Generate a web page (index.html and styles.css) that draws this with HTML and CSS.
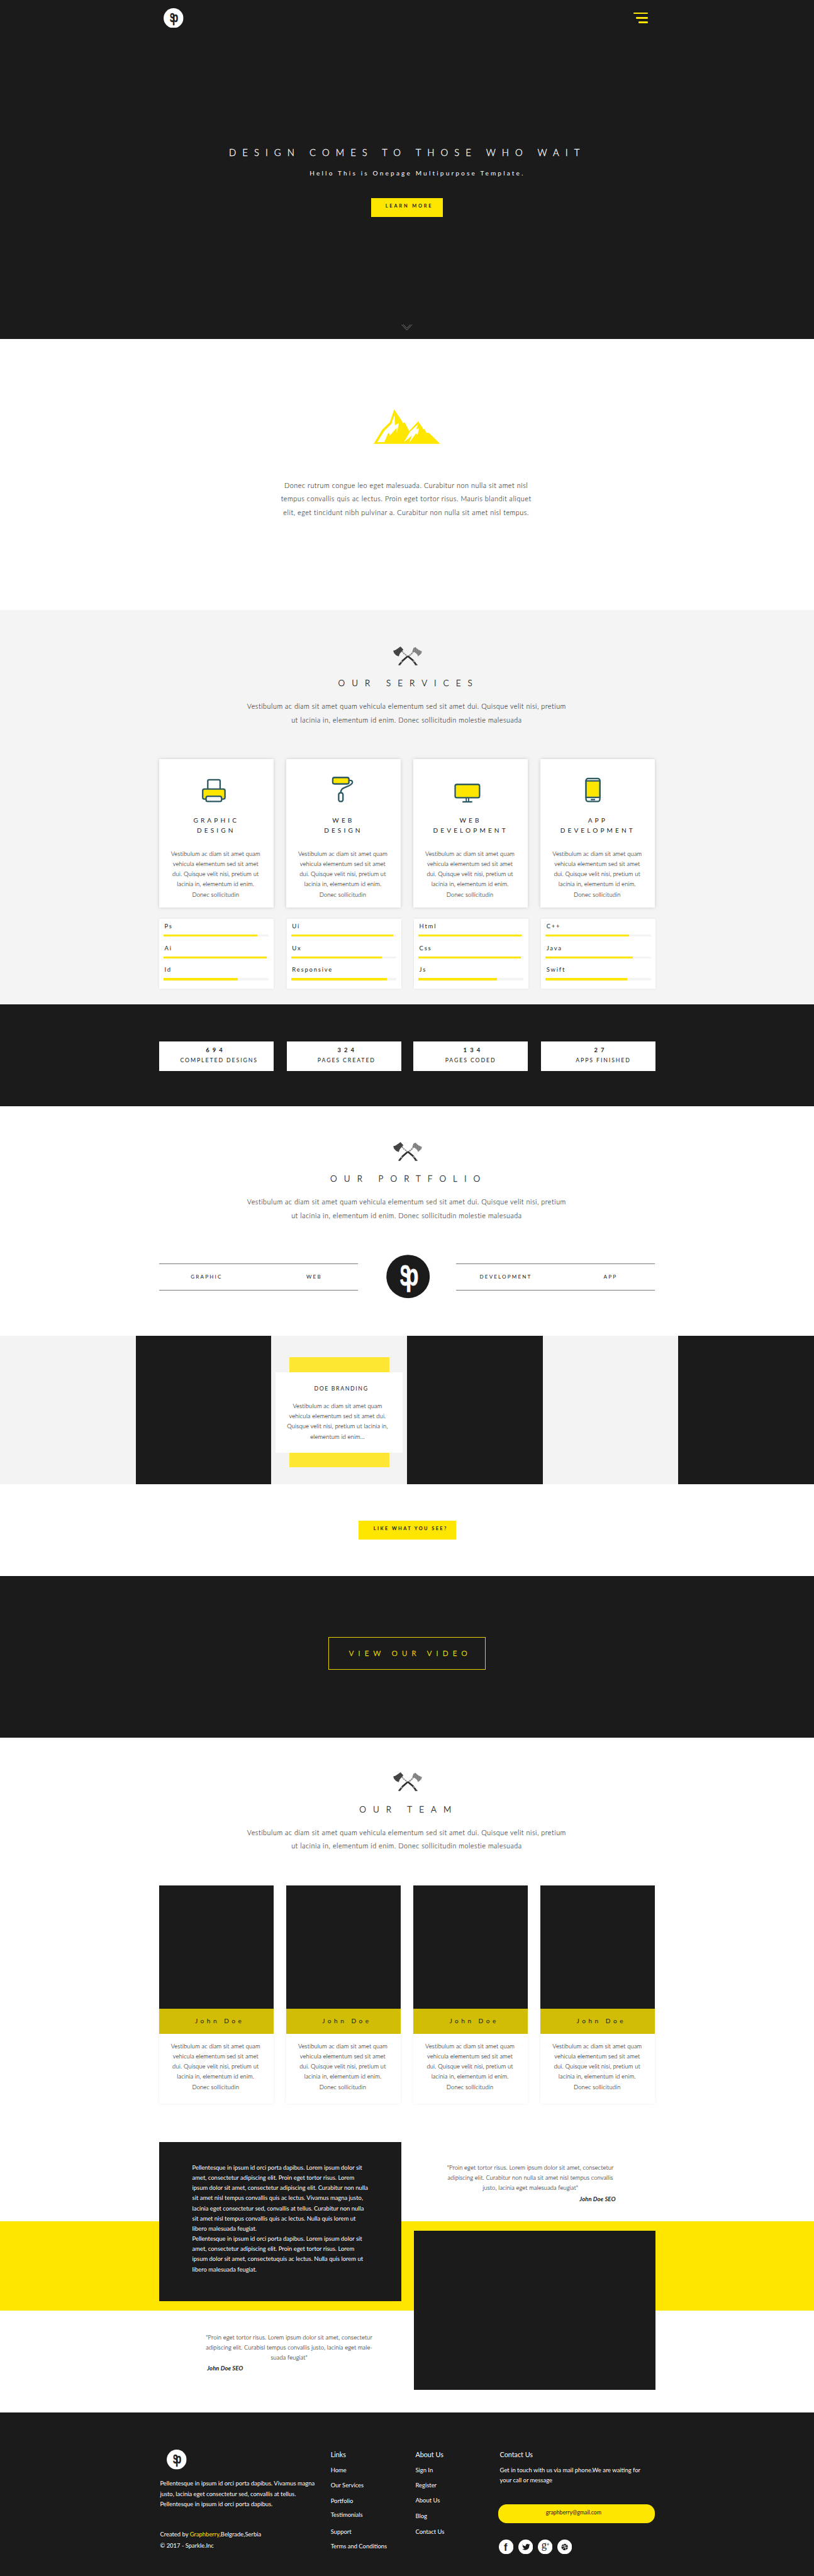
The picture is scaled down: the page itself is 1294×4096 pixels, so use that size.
FILE: index.html
```
<!DOCTYPE html>
<html lang="en">
<head>
<meta charset="utf-8">
<title>Sparkle</title>
<link rel="stylesheet" href="styles.css">
</head>
<body>
<svg class="defs" aria-hidden="true">
  <defs>
    <pattern id="grain-dark" width="17" height="13" patternUnits="userSpaceOnUse">
      <rect width="17" height="13" fill="#2b2b2b"/>
      <path d="M1 2h4v2H1zM9 1h3v3H9zM5 7h5v2H5zM13 8h3v3h-3zM1 10h3v2H1z" fill="#a5a5a5"/>
    </pattern>
    <pattern id="grain-light" width="15" height="13" patternUnits="userSpaceOnUse">
      <rect width="15" height="13" fill="#555"/>
      <path d="M1 1h5v4H1zM8 3h5v3H8zM3 8h6v3H3zM11 9h3v3h-3z" fill="#dcdcdc"/>
    </pattern>
    <symbol id="axes" viewBox="83 30 203 135" preserveAspectRatio="none">
      <path d="M144 62L160 80L186 100" fill="none" stroke="#8d8d8d" stroke-width="9" stroke-dasharray="12 4"/>
      <path d="M228 62L212 82L184 104" fill="none" stroke="#8d8d8d" stroke-width="10" stroke-dasharray="13 3"/>
      <path d="M184 100L150 130L126 160" fill="none" stroke="#2e2e2e" stroke-width="12"/>
      <path d="M186 98L222 128L246 160" fill="none" stroke="#2e2e2e" stroke-width="12"/>
      <path d="M146 134l-8 9M224 130l9 11" stroke="#ccc" stroke-width="5"/>
      <path d="M120 160h13M236 160h18" stroke="#555" stroke-width="8"/>
      <path d="M83 60L100 54L118 42L135 30L155 52L142 66L130 80L122 100L104 92L90 78Z" fill="url(#grain-dark)"/>
      <path d="M226 40L240 35L262 53L286 64L281 80L258 100L252 85L234 70L218 66Z" fill="url(#grain-light)"/>
    </symbol>
    <symbol id="logo" viewBox="50 31 310 310">
      <circle class="disc" cx="205" cy="186" r="154"/>
      <g class="mark">
        <text transform="translate(147 248) scale(.55 1)" font-size="204">S</text>
        <text transform="translate(188 251) scale(.7 1)" font-size="212">p</text>
      </g>
    </symbol>
  </defs>
</svg>

<header class="hero">
  <nav class="container topbar">
    <svg class="logo"><use href="#logo"/></svg>
    <div class="menu"><i></i><i></i><i></i></div>
  </nav>
  <h1>DESIGN COMES TO THOSE WHO WAIT</h1>
  <p class="tagline">Hello This is Onepage Multipurpose Template.</p>
  <a class="btn btn-learn">LEARN MORE</a>
  <svg class="chevron" viewBox="0 0 26 14"><path d="M.5 0L13 13.4L25.500 0M4.500 0L13 8.800L21.500 0"/></svg>
</header>

<section class="intro">
  <svg class="mountain" viewBox="631 184 308 228" preserveAspectRatio="none">
    <path fill="#ffe600" d="M631 412L671 317L706 268L726 184L758 252L766 273L775 269L795 326L837 263L857 303L859 313L868 315L874 338L888 340L939 412Z"/>
    <path fill="#fff" d="M728 218L729 289L748 274L738 342L737 306L706 358L700 335L680 400L648 400L680 326L713 280ZM837 281L828 315L841 310L834 352L827 342L795 406L808 356L771 400L800 330Z"/>
  </svg>
  <p>Donec rutrum congue leo eget malesuada. Curabitur non nulla sit amet nisl<br>tempus convallis quis ac lectus. Proin eget tortor risus. Mauris blandit aliquet<br>elit, eget tincidunt nibh pulvinar a. Curabitur non nulla sit amet nisl tempus.</p>
</section>

<section class="services">
  <div class="head">
    <svg class="axes"><use href="#axes"/></svg>
    <h2>OUR SERVICES</h2>
    <p>Vestibulum ac diam sit amet quam vehicula elementum sed sit amet dui. Quisque velit nisi, pretium<br>ut lacinia in, elementum id enim. Donec sollicitudin molestie malesuada</p>
  </div>
  <div class="container cards">
    <article class="card">
      <svg class="icon" viewBox="0 0 270 110"><path d="M114.700 70V52q0-3.300 3.300-3.300h22.500q3.300 0 3.300 3.300v18" fill="#fff"/><rect x="102.700" y="70.700" width="52.600" height="23.600" rx="4" fill="#ffe600"/><rect x="110.700" y="87.700" width="36.600" height="12.400" rx="4" fill="#f6f6f6"/></svg>
      <h3>GRAPHIC<br>DESIGN</h3>
      <p>Vestibulum ac diam sit amet quam<br>vehicula elementum sed sit amet<br>dui. Quisque velit nisi, pretium ut<br>lacinia in, elementum id enim.<br>Donec sollicitudin</p>
    </article>
    <article class="card">
      <svg class="icon" viewBox="0 0 270 110"><rect x="109.700" y="43.400" width="38.200" height="15.200" rx="4" fill="#ffe600"/><path d="M148.500 50.200h3c4 0 5.300 3 4.300 6c-3 8-20 9.500-24.500 15c-2 2.500-2.600 4-2.600 7" fill="none"/><rect x="123.700" y="79.400" width="10.200" height="20.700" rx="4.500" fill="#f6f6f6"/></svg>
      <h3>WEB<br>DESIGN</h3>
      <p>Vestibulum ac diam sit amet quam<br>vehicula elementum sed sit amet<br>dui. Quisque velit nisi, pretium ut<br>lacinia in, elementum id enim.<br>Donec sollicitudin</p>
    </article>
    <article class="card">
      <svg class="icon" viewBox="0 0 270 110"><rect x="98.700" y="59.700" width="57.600" height="31.400" rx="4" fill="#ffe600"/><path d="M125 92v8M130.500 92v8" stroke-width="2.800"/><path d="M116 100.900h23"/></svg>
      <h3>WEB<br>DEVELOPMENT</h3>
      <p>Vestibulum ac diam sit amet quam<br>vehicula elementum sed sit amet<br>dui. Quisque velit nisi, pretium ut<br>lacinia in, elementum id enim.<br>Donec sollicitudin</p>
    </article>
    <article class="card">
      <svg class="icon" viewBox="0 0 270 110"><rect x="107.700" y="45.700" width="32.600" height="54.300" rx="5" fill="#fff"/><path d="M107.700 51.300h32.600v38.900h-32.600z" fill="#ffe600"/><path d="M119 95.500h10"/></svg>
      <h3>APP<br>DEVELOPMENT</h3>
      <p>Vestibulum ac diam sit amet quam<br>vehicula elementum sed sit amet<br>dui. Quisque velit nisi, pretium ut<br>lacinia in, elementum id enim.<br>Donec sollicitudin</p>
    </article>
  </div>
  <div class="container skills">
    <dl><dt>Ps</dt><dd><i style="width:89.2%"></i></dd><dt>Ai</dt><dd><i style="width:98%"></i></dd><dt>Id</dt><dd><i style="width:70.7%"></i></dd></dl>
    <dl><dt>Ui</dt><dd><i style="width:96.9%"></i></dd><dt>Ux</dt><dd><i style="width:86.3%"></i></dd><dt>Responsive</dt><dd><i style="width:91%"></i></dd></dl>
    <dl><dt>Html</dt><dd><i style="width:97.8%"></i></dd><dt>Css</dt><dd><i style="width:97.5%"></i></dd><dt>Js</dt><dd><i style="width:74.6%"></i></dd></dl>
    <dl><dt>C++</dt><dd><i style="width:79.3%"></i></dd><dt>Java</dt><dd><i style="width:83%"></i></dd><dt>Swift</dt><dd><i style="width:77.7%"></i></dd></dl>
  </div>
</section>

<section class="stats">
  <div class="container counters">
    <div class="c1"><b>694</b><span>COMPLETED DESIGNS</span></div>
    <div class="c2"><b>324</b><span>PAGES CREATED</span></div>
    <div class="c3"><b>134</b><span>PAGES CODED</span></div>
    <div class="c4"><b>27</b><span>APPS FINISHED</span></div>
  </div>
</section>

<section class="portfolio">
  <div class="head">
    <svg class="axes"><use href="#axes"/></svg>
    <h2>OUR PORTFOLIO</h2>
    <p>Vestibulum ac diam sit amet quam vehicula elementum sed sit amet dui. Quisque velit nisi, pretium<br>ut lacinia in, elementum id enim. Donec sollicitudin molestie malesuada</p>
  </div>
  <div class="container filter">
    <div class="tabs tabs-left"><a>GRAPHIC</a><a>WEB</a></div>
    <svg class="logo logo-big"><use href="#logo"/></svg>
    <div class="tabs tabs-right"><a>DEVELOPMENT</a><a>APP</a></div>
  </div>
  <div class="tiles">
    <div></div>
    <div class="dark"></div>
    <div class="featured">
      <div class="accent">
        <div class="sheet">
          <h4>DOE BRANDING</h4>
          <p>Vestibulum ac diam sit amet quam<br>vehicula elementum sed sit amet dui.<br>Quisque velit nisi, pretium ut lacinia in,<br>elementum id enim...</p>
        </div>
      </div>
    </div>
    <div class="dark"></div>
    <div></div>
    <div class="dark"></div>
  </div>
  <a class="btn btn-like">LIKE WHAT YOU SEE?</a>
</section>

<section class="video"><a>VIEW OUR VIDEO</a></section>

<section class="team">
  <div class="head">
    <svg class="axes"><use href="#axes"/></svg>
    <h2>OUR TEAM</h2>
    <p>Vestibulum ac diam sit amet quam vehicula elementum sed sit amet dui. Quisque velit nisi, pretium<br>ut lacinia in, elementum id enim. Donec sollicitudin molestie malesuada</p>
  </div>
  <div class="container members">
    <article><div class="photo"></div><h3>John Doe</h3><div class="bio"><svg><use href="#axes"/></svg><p>Vestibulum ac diam sit amet quam<br>vehicula elementum sed sit amet<br>dui. Quisque velit nisi, pretium ut<br>lacinia in, elementum id enim.<br>Donec sollicitudin</p></div></article>
    <article><div class="photo"></div><h3>John Doe</h3><div class="bio"><svg><use href="#axes"/></svg><p>Vestibulum ac diam sit amet quam<br>vehicula elementum sed sit amet<br>dui. Quisque velit nisi, pretium ut<br>lacinia in, elementum id enim.<br>Donec sollicitudin</p></div></article>
    <article><div class="photo"></div><h3>John Doe</h3><div class="bio"><svg><use href="#axes"/></svg><p>Vestibulum ac diam sit amet quam<br>vehicula elementum sed sit amet<br>dui. Quisque velit nisi, pretium ut<br>lacinia in, elementum id enim.<br>Donec sollicitudin</p></div></article>
    <article><div class="photo"></div><h3>John Doe</h3><div class="bio"><svg><use href="#axes"/></svg><p>Vestibulum ac diam sit amet quam<br>vehicula elementum sed sit amet<br>dui. Quisque velit nisi, pretium ut<br>lacinia in, elementum id enim.<br>Donec sollicitudin</p></div></article>
  </div>
</section>

<section class="testimonials">
  <div class="container voices">
    <div>
      <div class="panel"><p>Pellentesque in ipsum id orci porta dapibus. Lorem ipsum dolor sit<br>amet, consectetur adipiscing elit. Proin eget tortor risus. Lorem<br>ipsum dolor sit amet, consectetur adipiscing elit. Curabitur non nulla<br>sit amet nisl tempus convallis quis ac lectus. Vivamus magna justo,<br>lacinia eget consectetur sed, convallis at tellus. Curabitur non nulla<br>sit amet nisl tempus convallis quis ac lectus. Nulla quis lorem ut<br>libero malesuada feugiat.<br>Pellentesque in ipsum id orci porta dapibus. Lorem ipsum dolor sit<br>amet, consectetur adipiscing elit. Proin eget tortor risus. Lorem<br>ipsum dolor sit amet, consectetuquis ac lectus. Nulla quis lorem ut<br>libero malesuada feugiat.</p></div>
      <blockquote class="quote-left">"Proin eget tortor risus. Lorem ipsum dolor sit amet, consectetur<br>adipiscing elit. Curabisl tempus convallis justo, lacinia eget male-<br>suada feugiat"</blockquote>
      <cite class="cite-left">John Doe SEO</cite>
    </div>
    <div>
      <blockquote class="quote-right">"Proin eget tortor risus. Lorem ipsum dolor sit amet, consectetur<br>adipiscing elit. Curabitur non nulla sit amet nisl tempus convallis<br>justo, lacinia eget malesuada feugiat"</blockquote>
      <cite class="cite-right">John Doe SEO</cite>
      <div class="panel"></div>
    </div>
  </div>
</section>

<footer class="footer">
  <div class="container columns">
    <div class="about">
      <svg class="logo"><use href="#logo"/></svg>
      <p>Pellentesque in ipsum id orci porta dapibus. Vivamus magna<br>justo, lacinia eget consectetur sed, convallis at tellus.<br>Pellentesque in ipsum id orci porta dapibus.</p>
      <p class="made">Created by <em>Graphberry</em>,Belgrade,Serbia</p>
      <p class="copy">© 2017 - Sparkle.Inc</p>
    </div>
    <div>
      <h5>Links</h5>
      <ul class="links"><li>Home</li><li>Our Services</li><li>Portfolio</li><li>Testimonials</li><li>Support</li><li>Terms and Conditions</li></ul>
    </div>
    <div>
      <h5>About Us</h5>
      <ul class="company"><li>Sign In</li><li>Register</li><li>About Us</li><li>Blog</li><li>Contact Us</li></ul>
    </div>
    <div class="contact">
      <h5>Contact Us</h5>
      <p>Get in touch with us via mail phone.We are waiting for<br>your call or message</p>
      <a class="mail">graphberry@gmail.com</a>
      <div class="social">
        <svg viewBox="0 0 104 104"><circle cx="52" cy="52" r="52"/><text x="36" y="78" font-size="72" font-weight="700" font-family="Liberation Sans, sans-serif">f</text></svg>
        <svg viewBox="0 0 104 104"><circle cx="52" cy="52" r="52"/><path d="M27 35c7 8 15 12 25 13c-2-10 5-17 13-17c4 0 7 2 9 4l7-3l-4 6l6-1l-6 6c1 18-12 31-29 31c-8 0-15-2-21-6c7 0 12-1 16-5c-5 0-8-3-10-7h5c-6-2-9-6-9-11l5 1c-5-4-6-9-3-15"/></svg>
        <svg viewBox="0 0 104 104"><circle cx="52" cy="52" r="52"/><text x="26" y="64" font-size="74" font-family="Liberation Serif, serif">g</text><path d="M70 24h3v8h8v3h-8v8h-3v-8h-8v-3h8z"/></svg>
        <svg viewBox="0 0 104 104"><circle cx="52" cy="52" r="52"/><circle class="ball" cx="52" cy="53" r="23"/><path class="seams" d="M42 31q14 16 20 45M30 49q26 2 37-13M36 70q12-20 39-15"/></svg>
      </div>
    </div>
  </div>
</footer>
</body>
</html>
```
FILE: styles.css
```
/* 1rem = 100 design pixels of the 1920px layout */
html { font-size: 67.396px; }
* { box-sizing: border-box; }
body {
  margin: 0;
  font: 400 .14rem/.24rem Lato, "Liberation Sans", sans-serif;
  color: #1b1b1b;
  background: #fff;
  overflow-x: hidden;
}
h1, h2, h3, h4, h5, p, dl, dd, ul, blockquote { margin: 0; padding: 0; font-weight: 400; }
ul { list-style: none; }
svg { display: block; flex: none; }
.defs { position: absolute; width: 0; height: 0; }
p, h1, h2, h3, h4, h5, a, li, span, blockquote { white-space: nowrap; }
.container { width: 11.7rem; margin: 0 auto; }

/* logo */
.logo { width: .47rem; height: .47rem; }
.disc { fill: var(--disc, #fff); }
.mark { fill: var(--mark, #1b1b1b); stroke: var(--mark, #1b1b1b); stroke-width: 4; font-family: "Liberation Sans", sans-serif; font-weight: 700; }
.logo-big { width: 1.03rem; height: 1.03rem; margin-left: .06rem; --disc: #1b1b1b; --mark: #fff; }

/* hero */
.hero { height: 8rem; background: #1b1b1b; color: #fff; display: flex; flex-direction: column; align-items: center; padding-top: .19rem; }
.topbar { display: flex; justify-content: space-between; padding: 0 .17rem 0 .11rem; height: .47rem; }
.menu { display: flex; flex-direction: column; align-items: flex-end; gap: .07rem; padding-top: .1rem; }
.menu i { width: .34rem; height: .04rem; border-radius: .02rem; background: #ffe600; }
.menu i:nth-child(2) { width: .28rem; }
.menu i:nth-child(3) { width: .22rem; }
.hero h1 { margin-top: 2.785rem; font-size: .22rem; line-height: .3rem; font-weight: 300; letter-spacing: .149rem; padding-left: .02rem; -webkit-text-stroke: .3px; }
.tagline { margin-top: .247rem; font-size: .15rem; line-height: .2rem; letter-spacing: .047rem; padding-left: .49rem; }
.btn { display: block; height: .45rem; background: #ffe600; color: #1b1b1b; font-size: .11rem; line-height: .39rem; font-weight: 700; }
.btn-learn { width: 1.7rem; margin-top: .478rem; padding-left: .34rem; letter-spacing: .042rem; }
.chevron { width: .26rem; height: .14rem; margin-top: 2.53rem; fill: none; stroke: #999; stroke-width: 1; }

/* intro */
.intro { height: 6.4rem; padding-top: 1.66rem; }
.mountain { width: 1.57rem; height: .814rem; margin: 0 auto; }
.intro p { margin-top: .814rem; padding-right: .04rem; text-align: center; font-size: .16rem; line-height: .32rem; letter-spacing: .0083rem; }

/* light body copy */
.intro p, .head p, .card p, .sheet p, .bio p, blockquote { font-weight: 300; color: #333; -webkit-text-stroke: .12px; }

/* section heading */
.head { display: flex; flex-direction: column; align-items: center; text-align: center; }
.axes { width: .68rem; height: .45rem; margin-left: .03rem; }
.head h2 { margin-top: .268rem; padding-left: .08rem; font-size: .2rem; line-height: .3rem; font-weight: 300; letter-spacing: .164rem; -webkit-text-stroke: .3px; }
.head p { margin-top: .235rem; padding-right: .02rem; font-size: .16rem; line-height: .32rem; letter-spacing: .008rem; }

/* services */
.services { height: 9.3rem; padding-top: .85rem; background: #f4f4f4; }
.cards, .members { display: flex; gap: .3rem; }
.cards { margin-top: .767rem; }
.card { width: 2.7rem; height: 3.5rem; background: #fff; box-shadow: 0 0 .08rem rgba(0, 0, 0, .17); text-align: center; }
.icon { width: 2.7rem; height: 1.1rem; stroke: #2b5862; stroke-width: 3.4; }
.card h3 { margin-top: .214rem; font-size: .15rem; letter-spacing: .061rem; }
.card p, .bio p { letter-spacing: .0017rem; padding-right: .03rem; }
.card p { margin-top: .327rem; }
.skills { display: grid; grid-template-columns: 3.01rem 3rem 3rem 2.7rem; margin-top: .27rem; }
.skills dl { width: 2.7rem; height: 1.65rem; padding: .061rem .11rem 0; background: #fff; box-shadow: 0 0 .06rem rgba(0, 0, 0, .07); }
.skills dt { padding-left: .02rem; letter-spacing: .027rem; }
.skills dd { height: .05rem; margin: .069rem 0 .155rem; background: #f4f4f4; }
.skills i { display: block; height: 100%; background: #ffe600; }

/* counters */
.stats { height: 2.4rem; padding-top: .87rem; background: #1b1b1b; }
.counters { display: grid; grid-template-columns: 3.01rem 2.99rem 3.01rem 2.7rem; }
.counters div { width: 2.7rem; height: .7rem; padding-top: .106rem; background: #fff; display: flex; flex-direction: column; }
.counters b { font-size: .14rem; line-height: .22rem; letter-spacing: .075rem; }
.counters span { margin-top: .01rem; font-size: .13rem; line-height: .22rem; letter-spacing: .028rem; }
.c1 b { padding-left: 1.105rem; } .c1 span { padding-left: .5rem; }
.c2 b { padding-left: 1.2rem; } .c2 span { padding-left: .73rem; }
.c3 b { padding-left: 1.18rem; } .c3 span { padding-left: .75rem; }
.c4 b { padding-left: 1.255rem; } .c4 span { padding-left: .82rem; }

/* portfolio */
.portfolio { height: 11.09rem; padding-top: .84rem; }
.filter { display: flex; justify-content: space-between; align-items: center; margin-top: .775rem; }
.tabs { display: grid; width: 4.7rem; height: .64rem; border: solid #777; border-width: 1px 0; align-items: center; font-size: .12rem; letter-spacing: .032rem; }
.tabs-left { grid-template-columns: 2.727rem 1fr; padding-left: .75rem; }
.tabs-right { grid-template-columns: 2.923rem 1fr; padding-left: .564rem; }
.tiles { display: grid; grid-template-columns: repeat(6, 1fr); height: 3.5rem; margin-top: .877rem; background: #f3f3f3; }
.dark { background: #1b1b1b; }
.featured { display: flex; justify-content: center; align-items: flex-start; padding-top: .51rem; }
.accent { display: flex; justify-content: center; align-items: center; width: 2.36rem; height: 2.6rem; background: #fee733; }
.sheet { flex: none; width: 3rem; height: 1.9rem; padding-top: .266rem; background: #fff; text-align: center; }
.sheet h4 { font-size: .13rem; letter-spacing: .024rem; padding-left: .1rem; }
.sheet p { margin-top: .18rem; padding-right: .08rem; letter-spacing: .0017rem; }
.btn-like { width: 2.3rem; margin: .863rem auto 0; padding-left: .36rem; letter-spacing: .0357rem; }

/* video */
.video { height: 3.8rem; padding-top: 1.44rem; background: #1b1b1b; }
.video a { display: block; width: 3.7rem; height: .77rem; margin: 0 auto; padding-left: .465rem; border: 1px solid #e8d200; color: #ffe600; font-size: .17rem; line-height: .75rem; font-weight: 300; letter-spacing: .108rem; -webkit-text-stroke: .3px; }

/* team */
.team { height: 9.55rem; padding-top: .83rem; }
.members { margin-top: .777rem; }
.members article { width: 2.7rem; height: 5.15rem; background: #fff; box-shadow: 0 0 .08rem rgba(0, 0, 0, .06); }
.photo { height: 2.9rem; background: #1b1b1b; }
.members h3 { height: .6rem; padding-left: .85rem; background: #d2bd06; font-size: .15rem; line-height: .58rem; letter-spacing: .067rem; }
.bio { display: grid; justify-items: center; align-items: start; padding-top: .172rem; text-align: center; }
.bio svg, .bio p { grid-area: 1 / 1; }
.bio svg { width: 1.07rem; height: .76rem; margin-top: .21rem; opacity: .035; }

/* testimonials */
.testimonials { height: 6.38rem; background: linear-gradient(#fff 1.87rem, #ffe600 1.87rem, #ffe600 3.97rem, #fff 3.97rem); }
.voices { display: grid; grid-template-columns: 5.7rem 5.7rem; gap: .3rem; padding-left: .01rem; }
.panel { height: 3.75rem; background: #1b1b1b; color: #fff; padding: .486rem 0 0 .774rem; }
blockquote { text-align: center; letter-spacing: .0013rem; }
cite { display: block; font-weight: 700; font-size: .14rem; letter-spacing: .0015rem; }
.quote-left { margin-top: .746rem; padding-left: .42rem; }
.cite-left { margin-top: .01rem; padding-left: 1.126rem; }
.quote-right { margin-top: .486rem; padding-right: .2rem; }
.cite-right { margin: .02rem .94rem .624rem 0; text-align: right; }

/* footer */
.footer { height: 3.86rem; background: #1b1b1b; color: #fff; }
.columns { display: grid; grid-template-columns: 4.05rem 2rem 1.95rem 3.7rem; padding-top: .878rem; }
h5 { font-size: .16rem; margin-bottom: .125rem; }
.about .logo { margin-left: .185rem; }
.about p { margin-top: .214rem; padding-left: .025rem; }
.about .made { margin-top: .48rem; }
.about .copy { margin-top: .023rem; }
em { font-style: normal; color: #ffe600; }
ul { display: grid; }
.links { grid-template-rows: .36rem .37rem .33rem .39rem .35rem .24rem; }
.company { grid-template-rows: .36rem .36rem .36rem .37rem .24rem; }
.contact h5, .contact p { padding-left: .04rem; }
.mail { display: block; height: .45rem; margin-top: .437rem; padding-right: .14rem; border-radius: .2rem; background: #ffe600; color: #1b1b1b; font-size: .13rem; line-height: .4rem; text-align: center; }
.social { display: flex; gap: .113rem; margin-top: .38rem; padding-left: .01rem; }
.social svg { width: .347rem; height: .347rem; fill: #1b1b1b; }
.social circle:first-child { fill: #fff; }
.seams { fill: none; stroke: #fff; stroke-width: 4; }
```
